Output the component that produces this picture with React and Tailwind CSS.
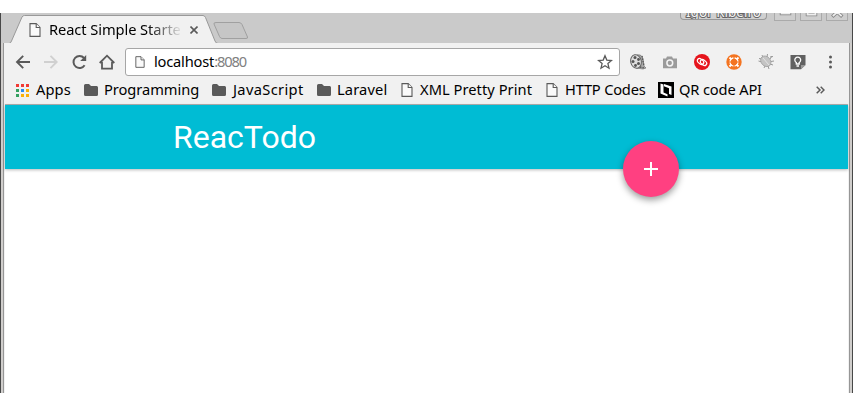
import React from "react";

const UI = "font-['Noto_Sans','Open_Sans',sans-serif]";

function FileIcon({ className }) {
  return (
    <svg viewBox="0 0 12 14" className={className} fill="#fafafa" stroke="#5a5a5a" strokeWidth="1.1">
      <path d="M1 .6h6.2L11 4.4v9H1z" />
      <path d="M7.2.8v3.7H11" />
    </svg>
  );
}

function FolderIcon() {
  return (
    <svg viewBox="0 0 14 12" className="h-3 w-3.5" fill="#5a5a5a">
      <path d="M0 1.5Q0 0 1.5 0H5l2 2h5.700Q14 2 14 3.500v7Q14 12 12.500 12h-11Q0 12 0 10.500z" />
    </svg>
  );
}

function AppsIcon() {
  const colors = ["#f13a34", "#f13a34", "#f13a34", "#34a060", "#2a8cf0", "#fbb008", "#34a060", "#fbb008", "#fbb008"];
  return (
    <svg viewBox="0 0 13 13" className="h-[13px] w-[13px]" shapeRendering="crispEdges">
      {colors.map((c, i) => (
        <rect key={i} x={(i % 3) * 5} y={Math.floor(i / 3) * 5} width="3" height="3" fill={c} />
      ))}
    </svg>
  );
}

function QrIcon() {
  return (
    <svg viewBox="0 0 16 16" className="-ml-px h-4 w-4 shrink-0">
      <path d="M0 0h16v16H0z" fill="#000" />
      <path d="M2.500 1.500l3 1v8l4 1.700V14.500l-7-3z" fill="#fff" />
      <path d="M6 2l7.500 2.500V13l-2.500-1V6.300L6 4.300z" fill="#fff" />
    </svg>
  );
}

function Bookmark({ icon, label, cell, text }) {
  return (
    <div className={`flex shrink-0 items-center ${cell}`}>
      <span className="flex w-5 shrink-0 items-center">{icon}</span>
      <span className={`-mt-0.5 whitespace-nowrap ${text}`}>{label}</span>
    </div>
  );
}

function TabStrip() {
  return (
    <div className="relative h-[30px] w-full bg-[#cacaca]">
      <svg viewBox="0 0 851 30" className="absolute inset-0 h-[30px] w-[851px]">
        <path d="M2 30.500H8Q9.500 30.500 10.500 28L21 4Q22 2.500 23.500 2.500H202Q203.500 2.500 204.500 4.500L214 28Q215 30.500 217 30.500H851" fill="#f1f1f1" stroke="#999" />
        <path d="M215 9.500H238Q240 9.500 241 11.500L246.500 24Q247 25.500 245 25.500H221Q219.500 25.500 218.500 23.500L213 11Q212.500 9.500 215 9.500z" fill="#c6c6c6" stroke="#a0a0a0" />
      </svg>
      <div className="relative flex h-full items-center pl-[28px] pt-1">
        <FileIcon className="h-3.5 w-3" />
        <span className="-mt-0.5 ml-[8px] w-[132px] overflow-hidden whitespace-nowrap text-[14.67px] leading-5 tracking-[-0.08px] text-black [mask-image:linear-gradient(to_right,black_98px,transparent_134px)]">
          React Simple Starte
        </span>
        <svg viewBox="0 0 8 8" className="ml-[9px] h-2 w-2" stroke="#5a5a5a" strokeWidth="1.6">
          <path d="M.5.500l7 7M7.500.500l-7 7" />
        </svg>
      </div>
      <div className="absolute right-[4px] top-0 flex h-2 items-start gap-1 overflow-hidden">
        <div className="mr-[3px] flex h-[7px] w-[87px] justify-center overflow-hidden rounded-b-[4px] border border-t-0 border-[#999] bg-[#d0d0d0]">
          <span className="-mt-[9px] whitespace-nowrap text-[13.500px] leading-4 text-[#f4f4f4] [-webkit-text-stroke:2px_#666] [paint-order:stroke_fill]">Igor Ribeiro</span>
        </div>
        {["M6.500 .500h8", "M6.500-5h8v6.500h-8z", "M6.500 2.500L14-4.500M6.500-4.500L14 2.500"].map((d) => (
          <div key={d} className="h-2 w-[22px] border border-t-0 border-[#aaa] bg-[#cecece]">
            <svg viewBox="0 0 20 7" className="h-[7px] w-5" fill="none">
              <path d={d} stroke="#888" strokeWidth="3.500" strokeLinecap="square" />
              <path d={d} stroke="#eee" strokeWidth="1.800" strokeLinecap="square" />
            </svg>
          </div>
        ))}
      </div>
    </div>
  );
}

function Extensions() {
  return (
    <div className="ml-[10px] flex items-center gap-4">
      <svg viewBox="0 0 16 16" className="h-4 w-4">
        <path d="M7 1Q12 0 13 5l1 7 2 2-3 1-7-1z" fill="#aaa" stroke="#777" strokeWidth=".7" />
        <ellipse cx="6" cy="7.500" rx="5.300" ry="6.800" fill="#ddd" stroke="#666" transform="rotate(-12 6 7.500)" />
        <g fill="#555"><circle cx="5" cy="3.500" r="1.500" /><circle cx="8.500" cy="5.500" r="1.400" /><circle cx="8.500" cy="9.500" r="1.500" /><circle cx="5.500" cy="11.500" r="1.400" /><circle cx="3" cy="7.500" r="1.500" /></g>
        <path d="M12 2l2 10M10 13l4 1" stroke="#555" strokeWidth="1.300" strokeDasharray="1.500 1" />
      </svg>
      <svg viewBox="0 0 16 16" className="h-4 w-4">
        <path d="M5 2.500h5l1 2h4v9.800H1V4.500h3z" fill="#9b9b9b" />
        <circle cx="7.800" cy="9" r="2.900" fill="#9b9b9b" stroke="#f4f4f4" strokeWidth="1.500" />
      </svg>
      <svg viewBox="0 0 16 16" className="h-4 w-4">
        <circle cx="8" cy="8" r="8" fill="#e6141c" />
        <g fill="none" stroke="#fff" strokeWidth="1.200">
          <rect x="3" y="5.300" width="7" height="4.400" rx="2.200" transform="rotate(40 6.500 7.500)" />
          <rect x="6" y="6.300" width="7" height="4.400" rx="2.200" transform="rotate(40 9.500 8.500)" />
        </g>
      </svg>
      <svg viewBox="0 0 16 16" className="h-4 w-4">
        <circle cx="8" cy="8" r="7.700" fill="#f47421" />
        <circle cx="8" cy="8" r="4" fill="none" stroke="#fff" strokeWidth="1.300" />
        <path d="M8 3v2.500M8 10.500V13M3 8h2.500M10.500 8H13" stroke="#f47421" strokeWidth="1.200" />
        <path d="M3.500 3.500l2 2M12.500 3.500l-2 2M3.500 12.500l2-2M12.500 12.500l-2-2" stroke="#fff" strokeWidth="1.800" />
      </svg>
      <svg viewBox="0 0 16 16" className="h-4 w-4">
        <path d="M4 5L1 4.500M5 3.500L4 1M9 3l.5-3M12 5l2-3M13 7.500l3-.5M12 10l3 1M10 12l1 3M7 12l-1 2M12 3l3-.5M4 8L.500 7" stroke="#999" fill="none" />
        <ellipse cx="7.800" cy="7.300" rx="5.800" ry="4.600" fill="#c4c4c4" stroke="#a0a0a0" strokeWidth=".8" transform="rotate(48 7.800 7.300)" />
        <path d="M5 4l6 7" stroke="#e4e4e4" />
      </svg>
      <svg viewBox="0 0 16 16" className="h-4 w-4">
        <path d="M.5 1h15v10l-4.500 4.300H.5z" fill="#616161" />
        <path d="M11 15.300V11h4.500z" fill="#999" />
        <path d="M6.300 10V8.500A2.900 2.900 0 1 1 9.200 8.500V10zM6.500 12h2.500" fill="none" stroke="#fff" strokeWidth="1.300" />
      </svg>
      <svg viewBox="0 0 16 16" className="h-4 w-4" fill="#5a5a5a">
        <circle cx="8.500" cy="3" r="1.500" /><circle cx="8.500" cy="8" r="1.500" /><circle cx="8.500" cy="13" r="1.500" />
      </svg>
    </div>
  );
}

function Toolbar() {
  return (
    <div className="flex h-[34px] items-center pl-[10px] pt-[3px]">
      <svg viewBox="0 0 16 16" className="h-4 w-4 shrink-0" fill="none" stroke="#5a5a5a" strokeWidth="1.900">
        <path d="M15 8H2M8.200 1.800L2 8l6.200 6.200" />
      </svg>
      <svg viewBox="0 0 16 16" className="ml-3 h-4 w-4 shrink-0" fill="none" stroke="#d0d0d0" strokeWidth="1.900">
        <path d="M1 8h12.700M7.500 1.800L13.700 8l-6.200 6.200" />
      </svg>
      <svg viewBox="0 0 16 16" className="ml-3 h-4 w-4 shrink-0">
        <path d="M13.600 11.200A6 6 0 1 1 13 4" fill="none" stroke="#5a5a5a" strokeWidth="2" />
        <path d="M15.200 1v6H9.200z" fill="#5a5a5a" />
      </svg>
      <svg viewBox="0 0 16 16" className="ml-3 h-4 w-4 shrink-0" fill="none" stroke="#5a5a5a" strokeWidth="1.800">
        <path d="M.7 9L8 1.700 15.300 9M3 8v6.600h10V8" />
      </svg>
      <div className="ml-[10px] flex h-7 w-[495px] shrink-0 items-center rounded-[3px] border border-[#a6a6a6] bg-white pl-[9px] pr-[6px]">
        <FileIcon className="h-3 w-[10px]" />
        <span className="-mt-0.5 ml-[9px] flex-1 text-[14.67px] leading-5 tracking-[-0.2px] text-black">
          localhost<span className="tracking-[-1.1px] text-[#808080]">:8080</span>
        </span>
        <svg viewBox="0 0 16 16" className="h-4 w-4" fill="none" stroke="#5a5a5a" strokeWidth="1.300">
          <path d="M8 1.700l1.800 4.400 4.700.4-3.600 3.100 1.100 4.600L8 11.700l-4 2.500 1.100-4.600L1.500 6.500l4.700-.4z" />
        </svg>
      </div>
      <Extensions />
    </div>
  );
}

function BookmarksBar() {
  return (
    <div className="flex h-[28px] items-center border-b border-[#b0b0b0] pl-[11px] pb-px text-[14.67px] leading-5 text-black">
      <Bookmark icon={<AppsIcon />} label="Apps" cell="w-[68px]" text="tracking-[0.1px]" />
      <Bookmark icon={<FolderIcon />} label="Programming" cell="w-[128px]" text="tracking-[-0.05px]" />
      <Bookmark icon={<FolderIcon />} label="JavaScript" cell="w-[105px]" text="pl-px tracking-[0.35px]" />
      <Bookmark icon={<FolderIcon />} label="Laravel" cell="w-[84px]" text="tracking-[0.15px]" />
      <Bookmark icon={<FileIcon className="h-3.5 w-3" />} label="XML Pretty Print" cell="w-[145px]" text="-ml-px tracking-[0.05px]" />
      <Bookmark icon={<FileIcon className="h-3.5 w-3" />} label="HTTP Codes" cell="w-[113px]" text="-ml-px tracking-[-0.2px]" />
      <Bookmark icon={<QrIcon />} label="QR code API" cell="w-[157px]" text="tracking-[-0.15px]" />
      <svg viewBox="0 0 9 8" className="h-2 w-[9px]" fill="none" stroke="#5a5a5a" strokeWidth="1.500">
        <path d="M.7.800L4 4 .700 7.200M4.700.800L8 4 4.700 7.200" />
      </svg>
    </div>
  );
}

export default function App() {
  return (
    <div className="h-[406px] w-[853px] overflow-hidden bg-white pt-[13px]">
      <div className={`flex h-[380px] w-full flex-col border-x border-[#484848] bg-[#d0cecc] ${UI}`}>
        <TabStrip />
        <div className="ml-[2px] mr-[2px] flex flex-1 flex-col border-x border-[#969696] bg-[#f1f1f1] px-px">
          <Toolbar />
          <BookmarksBar />
          <main className="flex flex-1 flex-col bg-white">
            <header className="relative flex h-16 items-center bg-[#00bcd4] pl-[168px] shadow-[0_1px_3px_rgba(0,0,0,0.28)]">
              <h1 className="font-['Roboto',sans-serif] text-[32px] leading-none font-normal text-white">ReacTodo</h1>
              <button className="absolute -bottom-7 left-[618px] flex h-14 w-14 items-center justify-center rounded-full bg-[#ff4081] shadow-[0_3px_7px_rgba(0,0,0,0.4)]">
                <svg viewBox="0 0 14 14" className="h-3.5 w-3.5" fill="#fff">
                  <path d="M6 0h2v6h6v2H8v6H6V8H0V6h6z" />
                </svg>
              </button>
            </header>
          </main>
        </div>
      </div>
    </div>
  );
}
